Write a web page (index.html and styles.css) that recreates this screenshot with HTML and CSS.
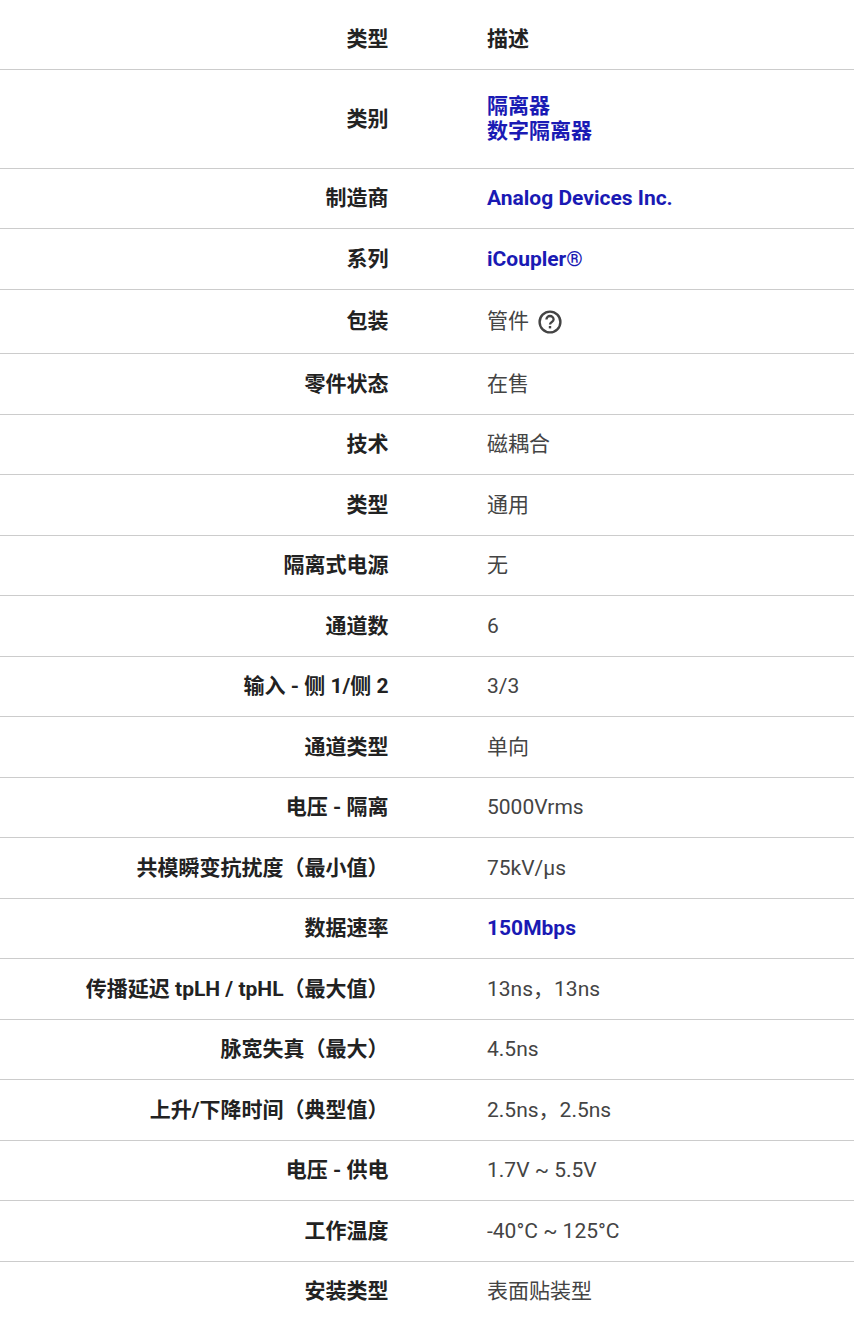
FILE: index.html
```html
<!DOCTYPE html>
<html lang="zh-CN">
<head>
<meta charset="utf-8">
<title>产品属性</title>
<link rel="stylesheet" href="styles.css">
</head>
<body>
<table class="specs">
<thead>
<tr><th>类型</th><th class="desc">描述</th></tr>
</thead>
<tbody>
<tr class="tall"><th>类别</th><td><a href="#">隔离器</a><br><a href="#">数字隔离器</a></td></tr>
<tr><th>制造商</th><td><a href="#">Analog Devices Inc.</a></td></tr>
<tr><th>系列</th><td><a href="#">iCoupler®</a></td></tr>
<tr class="pack"><th>包装</th><td><span class="with-help">管件<svg class="help" viewBox="0 0 24 24" width="24" height="24" aria-hidden="true"><circle cx="12" cy="12" r="10.4" fill="none" stroke="currentColor" stroke-width="2.4"/><path d="M8.4 9.6a3.6 3.6 0 0 1 7.2 0c0 2.4-3.6 2.4-3.6 4.9" fill="none" stroke="currentColor" stroke-width="2.3"/><rect x="10.8" y="16" width="2.4" height="2.4" fill="currentColor"/></svg></span></td></tr>
<tr><th>零件状态</th><td>在售</td></tr>
<tr><th>技术</th><td>磁耦合</td></tr>
<tr><th>类型</th><td>通用</td></tr>
<tr><th>隔离式电源</th><td>无</td></tr>
<tr><th>通道数</th><td>6</td></tr>
<tr><th>输入 - 侧 1/侧 2</th><td>3/3</td></tr>
<tr><th>通道类型</th><td>单向</td></tr>
<tr><th>电压 - 隔离</th><td>5000Vrms</td></tr>
<tr><th>共模瞬变抗扰度（最小值）</th><td>75kV/µs</td></tr>
<tr><th>数据速率</th><td><a href="#">150Mbps</a></td></tr>
<tr><th>传播延迟 tpLH / tpHL（最大值）</th><td>13ns，13ns</td></tr>
<tr><th>脉宽失真（最大）</th><td>4.5ns</td></tr>
<tr><th>上升/下降时间（典型值）</th><td>2.5ns，2.5ns</td></tr>
<tr><th>电压 - 供电</th><td>1.7V ~ 5.5V</td></tr>
<tr><th>工作温度</th><td>-40°C ~ 125°C</td></tr>
<tr><th>安装类型</th><td>表面贴装型</td></tr>
</tbody>
</table>
</body>
</html>
```
FILE: styles.css
```css
html {
  overflow: hidden;
}
body {
  margin: 0;
  padding-top: 9px;
  background: #fff;
  font-family: Roboto, "Noto Sans CJK JP", sans-serif;
  font-size: 21px;
  line-height: 25px;
  color: #444;
}
.specs {
  width: 854px;
  border-collapse: collapse;
  table-layout: fixed;
}
.specs th,
.specs td {
  padding: 17.75px 0 16.75px;
  vertical-align: middle;
}
.specs tr {
  border-bottom: 1px solid #ccc;
}
.specs tbody tr:last-child {
  border-bottom: 0;
}
.specs th {
  width: 388.5px;
  padding-right: 48px;
  text-align: right;
  font-weight: 700;
  color: #222;
}
.specs td,
.specs th.desc {
  padding-left: 50.5px;
  padding-right: 0;
  width: auto;
  text-align: left;
}
.specs .tall td {
  padding: 24px 0 24px 50.5px;
}
.specs a {
  color: #1a1ab4;
  font-weight: 700;
  text-decoration: none;
}
.with-help {
  display: flex;
  align-items: center;
  gap: 9px;
}
.help {
  display: block;
  color: #444;
}
.specs .pack td {
  padding-top: 19.75px;
  padding-bottom: 18.75px;
}
```
